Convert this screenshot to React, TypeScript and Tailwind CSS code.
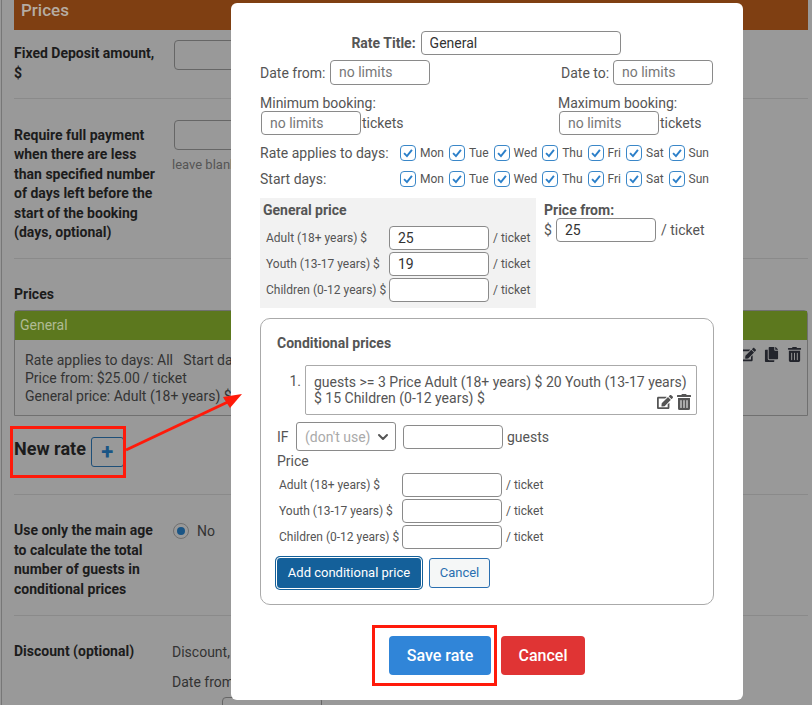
import { FaCopy, FaEdit, FaTrashAlt } from 'react-icons/fa'
import { FiChevronDown } from 'react-icons/fi'

const DAYS = ['Mon', 'Tue', 'Wed', 'Thu', 'Fri', 'Sat', 'Sun']

const inputClass = 'h-6 w-[100px] shrink-0 rounded border border-[#8a8a8a] bg-white px-2 text-sm text-[#333] outline-none placeholder:text-[#777]'

const DayChecks = () => (
  <div className="flex gap-[5px]">
    {DAYS.map(day => (
      <label key={day} className="flex items-center gap-1 text-xs text-[#555]">
        <span className="flex size-4 items-center justify-center rounded-[4px] border border-[#3a87c8] bg-white">
          <svg viewBox="0 0 16 16" className="size-4" fill="none">
            <path d="M3.5 8.2 6.8 11.5 12.5 4.5" stroke="#2b7fc9" strokeWidth="2.2" />
          </svg>
        </span>
        {day}
      </label>
    ))}
  </div>
)

const PriceRow = ({ label, value }: { label: string, value?: string }) => (
  <div className="flex h-[26px] items-center">
    <span className="w-[123px] pb-px text-xs whitespace-nowrap text-[#555]">{label}</span>
    <input className={inputClass} defaultValue={value} />
    <span className="ml-1 text-xs text-[#555]">/ ticket</span>
  </div>
)

const BackgroundPage = () => (
  <div className="ml-px h-[705px] border-l border-[#777] pr-[4px] pl-3 font-['Roboto',sans-serif] text-sm text-[#333]">
    <div className="h-[30px] bg-[#7f3f12] px-[7px] text-[17px] leading-[20px] font-medium text-[#b5aca2]">Prices</div>

    <div className="flex h-[69px] border-b border-[#8a8a8a] pt-[10px]">
      <div className="w-[160px] pt-[4px] pr-[10px] leading-[19.5px] font-bold text-[#1c1c1c]">Fixed Deposit amount, $</div>
      <div className="h-[30px] w-[120px] rounded border border-[#666]" />
    </div>

    <div className="flex h-[160px] border-b border-[#8a8a8a] pt-[21px]">
      <div className="w-[160px] pt-[5.5px] pr-[10px] leading-[19.5px] font-bold text-[#1c1c1c]">
        Require full payment when there are less than specified number of days left before the start of the booking (days, optional)
      </div>
      <div>
        <div className="h-[30px] w-[120px] rounded border border-[#666]" />
        <div className="mt-[6px] -ml-[2px] text-[13px] text-[#555]">leave blank</div>
      </div>
    </div>

    <div className="pt-[26px] leading-[19.5px] font-bold text-[#1c1c1c]">Prices</div>
    <div className="mt-[5px] h-[106px] rounded-t border border-[#707070]">
      <div className="h-[29px] bg-[#5c781e] px-[5px] pt-[5px] leading-[18px] text-[#b0bb94]">General</div>
      <div className="relative px-[10px] pt-[11px] leading-[18px]">
        <div>Rate applies to days: All &nbsp; Start days: All</div>
        <div>Price from: $25.00 / ticket</div>
        <div>General price: Adult (18+ years) $25.00</div>
        <div className="absolute top-[7px] right-[5px] flex items-center gap-[8px] text-[15px] text-[#23252c]">
          <FaEdit />
          <FaCopy />
          <FaTrashAlt />
        </div>
      </div>
    </div>

    <div className="flex h-[79px] items-start border-b border-[#8a8a8a] pt-[21px]">
      <span className="text-lg leading-[24px] font-bold text-[#1c1c1c]">New rate</span>
      <span className="ml-[5px] flex h-[30px] w-[33px] items-center justify-center rounded-[3px] border border-[#1f4f78] text-[22px] font-bold text-[#1a5585]">+</span>
    </div>

    <div className="flex h-[121px] border-b border-[#8a8a8a] pt-[26px]">
      <div className="w-[159px] pt-[0.5px] pr-[9px] leading-[19.5px] font-bold text-[#1c1c1c]">
        Use only the main age to calculate the total number of guests in conditional prices
      </div>
      <span className="mt-[2px] flex size-4 items-center justify-center rounded-full border border-[#707070]">
        <span className="size-2 rounded-full bg-[#1a5585]" />
      </span>
      <span className="ml-2">No</span>
    </div>

    <div className="flex pt-[25px]">
      <div className="w-[158px] font-bold text-[#1c1c1c]">Discount (optional)</div>
      <div className="pt-px">
        <div className="leading-[20px]">Discount, %</div>
        <div className="mt-[10px] leading-[20px]">Date from</div>
        <div className="mt-[5px] ml-[50px] h-[30px] w-[100px] rounded border border-[#666]" />
      </div>
    </div>
  </div>
)

const RateModal = () => (
  <div className="absolute top-[3px] left-[231px] h-[697px] w-[512px] rounded-md bg-white px-[29px] pt-[28px] font-['Roboto',sans-serif] text-sm text-[#555]">
    <div className="flex items-center justify-center gap-[5px] pr-[2px]">
      <span className="font-bold">Rate Title:</span>
      <input className={`${inputClass} w-[200px]!`} defaultValue="General" />
    </div>

    <div className="mt-[5px] flex h-[25px] items-center">
      <span className="w-[70px]">Date from:</span>
      <input className={`${inputClass} h-[25px] pb-[2px]`} placeholder="no limits" />
      <span className="ml-auto w-[52px]">Date to:</span>
      <input className={`${inputClass} mr-px ml-0 h-[25px] pb-[2px]`} placeholder="no limits" />
    </div>

    <div className="mt-[10px] flex">
      <div className="w-[298px]">
        <div className="h-[16px] leading-[16px]">Minimum booking:</div>
        <div className="flex items-center pl-px">
          <input className={inputClass} placeholder="no limits" />
          <span className="ml-px">tickets</span>
        </div>
      </div>
      <div>
        <div className="h-[16px] leading-[16px]">Maximum booking:</div>
        <div className="flex items-center pl-px">
          <input className={inputClass} placeholder="no limits" />
          <span className="ml-px">tickets</span>
        </div>
      </div>
    </div>

    <div className="mt-[5px] flex h-[26px] items-center">
      <span className="w-[140px]">Rate applies to days:</span>
      <DayChecks />
    </div>
    <div className="flex h-[26px] items-center">
      <span className="w-[140px]">Start days:</span>
      <DayChecks />
    </div>

    <div className="mt-[6px] flex items-start">
      <div className="h-[110px] w-[276px] bg-[#f2f2f2] px-[3px] pt-[4px]">
        <div className="h-[23px] leading-[16px] font-bold">General price</div>
        <div className="pl-[3px]">
          <PriceRow label="Adult (18+ years) $" value="25" />
          <PriceRow label="Youth (13-17 years) $" value="19" />
          <PriceRow label="Children (0-12 years) $" />
        </div>
      </div>
      <div className="ml-[8px] pt-[4px]">
        <div className="h-[16px] leading-[16px] font-bold">Price from:</div>
        <div className="flex items-center">
          <span className="w-[12px]">$</span>
          <input className={inputClass} defaultValue="25" />
          <span className="ml-[5px]">/ ticket</span>
        </div>
      </div>
    </div>

    <div className="mt-[10px] h-[287px] rounded-[10px] border border-[#aaa] px-4 pt-[16px]">
      <div className="leading-[16px] font-bold">Conditional prices</div>
      <div className="mt-[14px] flex">
        <span className="w-[28px] pt-[8px] pr-[4px] text-right leading-[16px]">1.</span>
        <div className="relative h-[50px] w-[392px] rounded-[2px] border border-[#aaa] px-2 pt-[8px] leading-[16px]">
          guests &gt;= 3 Price Adult (18+ years) $ 20 Youth (13-17 years) $ 15 Children (0-12 years) $
          <div className="absolute right-[4px] bottom-[4px] flex items-center gap-[3px] text-[16px] text-[#555]">
            <FaEdit />
            <FaTrashAlt />
          </div>
        </div>
      </div>
      <div className="mt-[8px] flex h-[29px] items-center pb-[2px]">
        <span className="w-[19px]">IF</span>
        <span className="flex h-[29px] w-[100px] items-center rounded-[3px] border border-[#8a8a8a] pl-2 text-[#aaa]">
          (don't use)
          <FiChevronDown className="ml-[5px] size-[16px] text-[#555]" strokeWidth={3} />
        </span>
        <input className={`${inputClass} ml-[7px]`} />
        <span className="ml-[4px]">guests</span>
      </div>
      <div className="h-[20px] leading-[18px]">Price</div>
      <div className="pl-[2px]">
        <PriceRow label="Adult (18+ years) $" />
        <PriceRow label="Youth (13-17 years) $" />
        <PriceRow label="Children (0-12 years) $" />
      </div>
      <div className="mt-[6px] -ml-[2px] flex items-center gap-[6px]">
        <button className="h-[34px] w-[148px] rounded-[5px] bg-[#14609a] text-[13px] text-white outline outline-1 -outline-offset-2 outline-white">Add conditional price</button>
        <button className="h-[30px] w-[61px] rounded-[3px] border border-[#2a6fb0] bg-[#f5f7f7] text-[13px] text-[#2a6fb0]">Cancel</button>
      </div>
    </div>

    <div className="mt-[31px] flex justify-center gap-[10px]">
      <button className="h-[39px] w-[102px] rounded bg-[#3085d8] text-base font-medium text-white">Save rate</button>
      <button className="h-[39px] w-[84px] rounded bg-[#e03434] text-base font-medium text-white">Cancel</button>
    </div>
  </div>
)

export default function App() {
  return (
    <div className="relative h-[705px] w-[812px] overflow-hidden bg-[#999]">
      <BackgroundPage />
      <RateModal />

      {/* red annotations on top of the screenshot */}
      <div className="absolute top-[426px] left-[10px] h-[52px] w-[116px] border-[3px] border-[#ff1a0a]" />
      <div className="absolute top-[625px] left-[372px] h-[61px] w-[125px] border-[3px] border-[#ff1a0a]" />
      <svg className="absolute top-[385px] left-[120px]" width="130" height="75" viewBox="0 0 130 75">
        <path d="M6 65 112 15" stroke="#ff1a0a" strokeWidth="3" />
        <path d="M122 9 103 12 110 23Z" fill="#ff1a0a" />
      </svg>
    </div>
  )
}
